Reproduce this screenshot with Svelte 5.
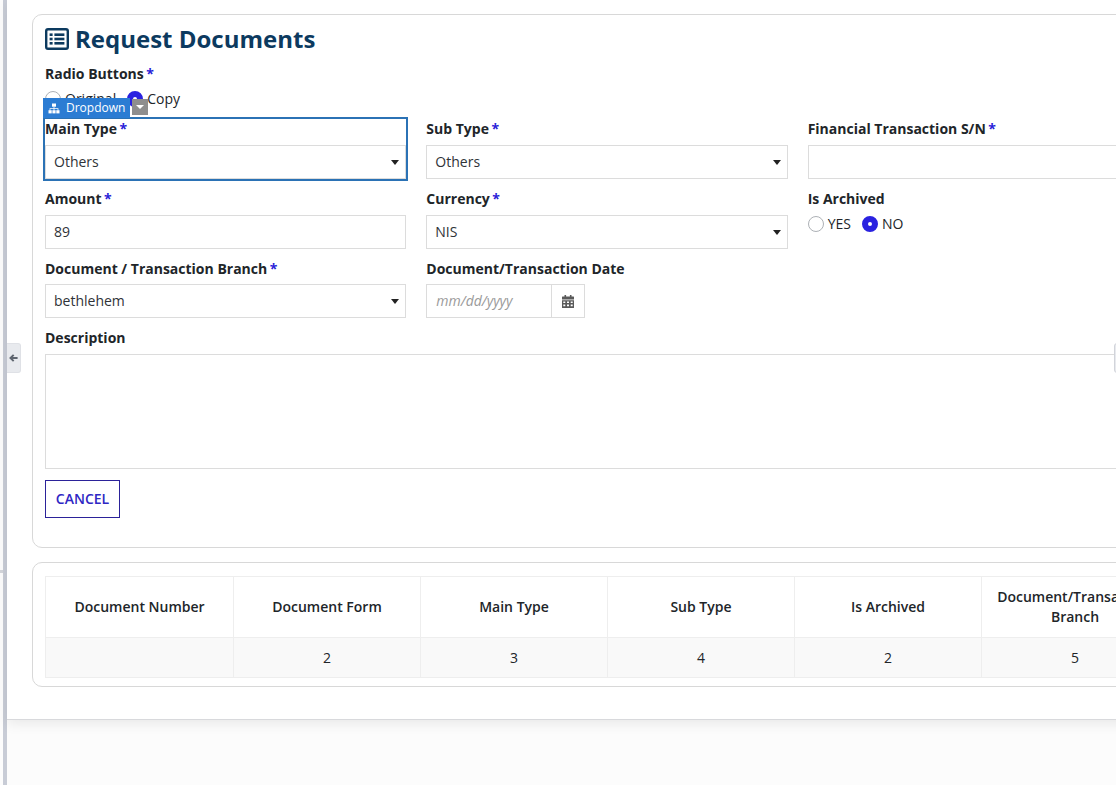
<script>
  const columns = [
    { title: 'Document Number', value: '' },
    { title: 'Document Form', value: '2' },
    { title: 'Main Type', value: '3' },
    { title: 'Sub Type', value: '4' },
    { title: 'Is Archived', value: '2' },
    { title: 'Document/Transaction Branch', value: '5' }
  ];
</script>

<div class="page">
  <div class="rail"></div>
  <div class="rail-tick"></div>
  <main class="panel">
    <button class="handle left" aria-label="Collapse">
      <svg viewBox="0 0 10 9" width="9" height="8"><path d="M5.2 1 1.6 4.5 5.2 8M2 4.5H9.6" fill="none" stroke="#5f6670" stroke-width="2.2"/></svg>
    </button>
    <div class="handle right"></div>

    <section class="card form-card">
      <h1>
        <svg class="title-icon" viewBox="0 0 24 22" width="24" height="22">
          <rect x="1.2" y="1.2" width="21.6" height="19.6" rx="1.8" fill="none" stroke="#0c3a5f" stroke-width="2.4"/>
          <g fill="#0c3a5f">
            <rect x="4.6" y="5.4" width="3" height="2.6"/><rect x="9.4" y="5.4" width="10" height="2.6"/>
            <rect x="4.6" y="9.7" width="3" height="2.6"/><rect x="9.4" y="9.7" width="10" height="2.6"/>
            <rect x="4.6" y="14" width="3" height="2.6"/><rect x="9.4" y="14" width="10" height="2.6"/>
          </g>
        </svg>
        Request Documents
      </h1>

      <div class="field-label top">Radio Buttons<span class="req">*</span></div>
      <div class="radios first">
        <label><span class="radio"></span>Original</label>
        <label><span class="radio on"></span>Copy</label>
      </div>

      <div class="grid">
        <div class="field selected">
          <div class="tag">
            <span class="tag-name">
              <svg viewBox="0 0 12 11" width="12" height="11" fill="#fff"><rect x="4" y="0.5" width="4" height="3.2"/><rect x="0.5" y="7.2" width="3.2" height="3.2"/><rect x="4.4" y="7.2" width="3.2" height="3.2"/><rect x="8.3" y="7.2" width="3.2" height="3.2"/><path d="M5.6 3.5h.8v1.7h4V7.3h-.8V6H6.4v1.3h-.8V6H2.4v1.3h-.8V5.2h4z"/></svg>
              Dropdown
            </span>
            <span class="tag-menu"><i class="caret white"></i></span>
          </div>
          <div class="field-label">Main Type<span class="req">*</span></div>
          <div class="control select">Others<i class="caret"></i></div>
        </div>
        <div class="field">
          <div class="field-label">Sub Type<span class="req">*</span></div>
          <div class="control select">Others<i class="caret"></i></div>
        </div>
        <div class="field">
          <div class="field-label">Financial Transaction S/N<span class="req">*</span></div>
          <div class="control"></div>
        </div>

        <div class="field">
          <div class="field-label">Amount<span class="req">*</span></div>
          <div class="control">89</div>
        </div>
        <div class="field">
          <div class="field-label">Currency<span class="req">*</span></div>
          <div class="control select">NIS<i class="caret"></i></div>
        </div>
        <div class="field">
          <div class="field-label">Is Archived</div>
          <div class="radios archived">
            <label><span class="radio"></span>YES</label>
            <label><span class="radio on"></span>NO</label>
          </div>
        </div>

        <div class="field tight">
          <div class="field-label">Document / Transaction Branch<span class="req">*</span></div>
          <div class="control select">bethlehem<i class="caret"></i></div>
        </div>
        <div class="field tight">
          <div class="field-label">Document/Transaction Date</div>
          <div class="date">
            <div class="date-input">mm/dd/yyyy</div>
            <div class="date-btn">
              <svg viewBox="0 0 12 13" width="12" height="13" fill="#5a5a5a"><path d="M2.5 0h1.6v2H2.5zM7.9 0h1.6v2H7.9zM.5 1.5h11a.5.5 0 0 1 .5.5v2.4H0V2a.5.5 0 0 1 .5-.5z"/><path fill-rule="evenodd" d="M0 5.2h12v7.3a.5.5 0 0 1-.5.5H.5a.5.5 0 0 1-.5-.5zM1.3 6.4v1.7h2V6.4zm3.7 0v1.7h2V6.4zm3.7 0v1.7h2V6.4zM1.3 9.6v1.7h2V9.6zm3.7 0v1.7h2V9.6zm3.7 0v1.7h2V9.6z"/></svg>
            </div>
          </div>
        </div>
        <div class="field tight"></div>
      </div>

      <div class="field-label desc">Description</div>
      <div class="textarea"></div>
      <button class="cancel">CANCEL</button>
    </section>

    <section class="card table-card">
      <table>
        <thead>
          <tr>{#each columns as c}<th>{c.title}</th>{/each}</tr>
        </thead>
        <tbody>
          <tr>{#each columns as c}<td>{c.value}</td>{/each}</tr>
        </tbody>
      </table>
    </section>
  </main>
</div>

<style>
  :global(body) {
    margin: 0;
    background: #fcfcfc;
    font-family: "Open Sans", "Liberation Sans", sans-serif;
    color: #212529;
    overflow: hidden;
  }
  .page {
    position: relative;
    width: 1116px;
    height: 785px;
    overflow: hidden;
    background: #fcfcfc;
  }
  .rail {
    position: absolute;
    left: 3px;
    top: 0;
    bottom: 0;
    width: 4px;
    background: #c8ccd6;
  }
  .rail-tick {
    position: absolute;
    left: 0;
    top: 570px;
    width: 3px;
    height: 3px;
    background: #d4d6db;
  }
  .panel {
    position: relative;
    margin-left: 7px;
    width: 1400px;
    height: 720px;
    box-sizing: border-box;
    padding: 14px 0 0 25px;
    background: #fff;
    border-bottom: 1px solid #d8d9dc;
    box-shadow: 0 4px 12px rgba(0, 0, 0, 0.08);
  }
  .handle {
    position: absolute;
    top: 343px;
    box-sizing: border-box;
    width: 14px;
    height: 30px;
    padding: 0;
    border: 1px solid #dfe1e6;
    border-left: 0;
    border-radius: 0 3px 3px 0;
    background: #e8eaee;
    display: flex;
    align-items: center;
    justify-content: center;
  }
  .handle.left { left: 0; }
  .handle.right {
    left: 1107px;
    z-index: 1;
    border: 1px solid #d2d4da;
    border-radius: 3px 0 0 3px;
  }
  .card {
    width: 1250px;
    box-sizing: border-box;
    background: #fff;
    border: 1px solid #d8d8d8;
    border-radius: 10px;
    padding: 0 12px;
  }
  .form-card { height: 534px; }
  .table-card {
    margin-top: 14px;
    height: 125px;
    padding-top: 13px;
  }
  h1 {
    margin: 0;
    padding-top: 6px;
    height: 36px;
    display: flex;
    align-items: center;
    gap: 6px;
    font-size: 24px;
    line-height: 36px;
    font-weight: 700;
    color: #0c3a5f;
    box-sizing: content-box;
  }
  .field-label {
    font-size: 14px;
    line-height: 20px;
    font-weight: 700;
    color: #212529;
    white-space: nowrap;
  }
  .field-label.top { margin-top: 7px; }
  .req {
    color: #2a22d8;
    margin-left: 2.5px;
  }
  .radios {
    display: flex;
    gap: 11px;
    font-size: 14px;
    line-height: 20px;
  }
  .radios.first { margin-top: 5px; margin-bottom: 10px; height: 20px; }
  .radios.archived { margin-top: -1px; }
  .radios label {
    display: flex;
    align-items: center;
    gap: 4px;
  }
  .radio {
    box-sizing: border-box;
    width: 16px;
    height: 16px;
    border: 1px solid #adb1b6;
    border-radius: 50%;
    background: #fff;
    display: inline-block;
  }
  .radio.on {
    border: 6px solid #2a22e0;
  }
  .grid {
    display: grid;
    grid-template-columns: repeat(3, 361.33px);
    column-gap: 20px;
  }
  .field {
    position: relative;
    height: 70px;
  }
  .field.tight { height: 69px; }
  .field .field-label { height: 26px; }
  .control {
    box-sizing: border-box;
    height: 34px;
    border: 1px solid #dcdcdc;
    padding: 0 8px;
    font-size: 14px;
    line-height: 32px;
    color: #2f3338;
    position: relative;
    background: #fff;
  }
  .caret {
    position: absolute;
    right: 6px;
    top: 14px;
    width: 0;
    height: 0;
    border-left: 4.5px solid transparent;
    border-right: 4.5px solid transparent;
    border-top: 5px solid #222;
  }
  .caret.white {
    position: static;
    display: block;
    border-top-color: #fff;
    border-left-width: 4px;
    border-right-width: 4px;
    border-top-width: 4px;
  }
  .selected::before {
    content: "";
    position: absolute;
    box-sizing: border-box;
    left: -2px;
    right: -2px;
    top: -2px;
    height: 64px;
    border: 2px solid #2b72b5;
    pointer-events: none;
    z-index: 2;
  }
  .tag {
    position: absolute;
    left: -2px;
    top: -21px;
    height: 20px;
    display: flex;
    z-index: 3;
    font-size: 12px;
    line-height: 20px;
  }
  .tag-name {
    width: 87px;
    background: #2b7cd3;
    color: #fff;
    display: flex;
    align-items: center;
    gap: 6px;
    padding-left: 5px;
    box-sizing: border-box;
  }
  .tag-menu {
    width: 16px;
    height: 16px;
    margin-top: 1px;
    margin-left: 2px;
    background: #8e8e8e;
    display: flex;
    align-items: center;
    justify-content: center;
  }
  .date { display: flex; width: 159px; height: 34px; margin-top: -1px; }
  .date-input {
    flex: 1;
    box-sizing: border-box;
    border: 1px solid #dcdcdc;
    padding: 0 9px;
    font-size: 14px;
    line-height: 32px;
    font-style: italic;
    color: #9a9a9a;
  }
  .date-btn {
    width: 33px;
    box-sizing: border-box;
    border: 1px solid #dcdcdc;
    border-left: 0;
    display: flex;
    align-items: center;
    justify-content: center;
  }
  .field.tight .control { margin-top: -1px; }
  .field-label.desc { height: 26px; }
  .textarea {
    box-sizing: border-box;
    height: 115px;
    border: 1px solid #dcdcdc;
  }
  .cancel {
    display: block;
    margin-top: 11px;
    width: 75px;
    height: 38px;
    padding: 0;
    background: #fff;
    border: 1px solid #2b2299;
    border-radius: 0;
    color: #2f27c4;
    font: 600 14px/36px "Open Sans", sans-serif;
  }
  table {
    border-collapse: collapse;
    table-layout: fixed;
    width: 1123px;
    font-size: 14px;
    color: #212529;
  }
  th, td {
    width: 187px;
    box-sizing: border-box;
    border: 1px solid #eeeeee;
    text-align: center;
    padding: 0 10px;
    line-height: 20px;
  }
  th:first-child { width: 188px; }
  th { height: 61px; font-weight: 600; }
  td { height: 40px; background: #f9f9f9; }
</style>
